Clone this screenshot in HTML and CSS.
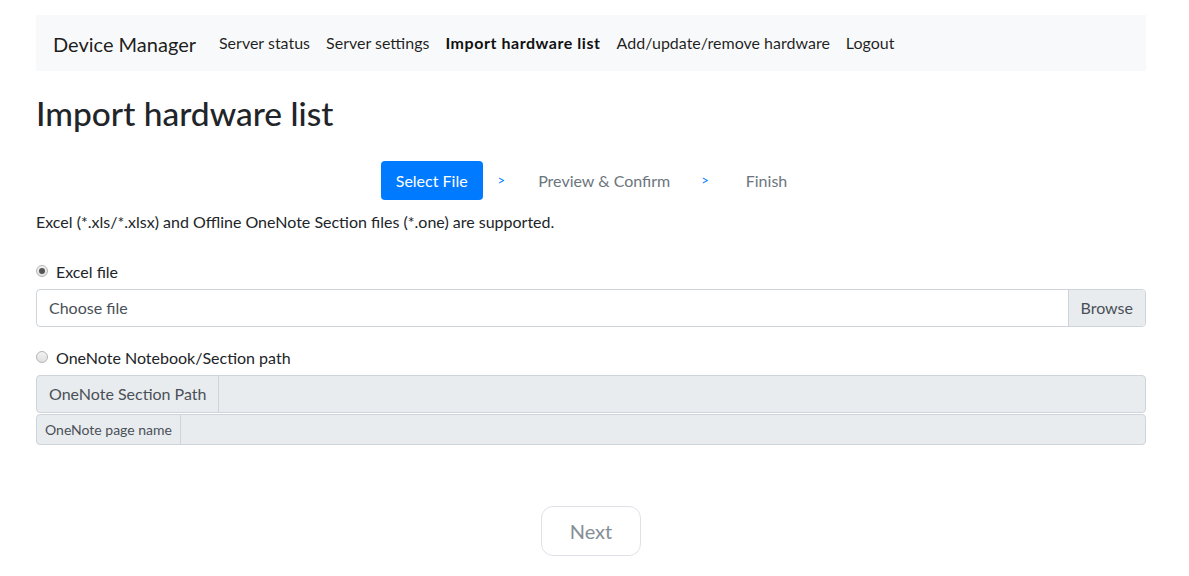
FILE: index.html
```html
<!DOCTYPE html>
<html lang="en">
<head>
<meta charset="utf-8">
<title>Import hardware list</title>
<link rel="stylesheet" href="styles.css">
</head>
<body>
<div class="container">
  <nav class="navbar">
    <span class="brand">Device Manager</span>
    <ul class="nav-links">
      <li><a class="nav-link">Server status</a></li>
      <li><a class="nav-link">Server settings</a></li>
      <li><a class="nav-link active">Import hardware list</a></li>
      <li><a class="nav-link">Add/update/remove hardware</a></li>
      <li><a class="nav-link">Logout</a></li>
    </ul>
  </nav>

  <h1 class="title">Import hardware list</h1>

  <ul class="steps">
    <li class="step current">Select File</li>
    <li class="sep">&gt;</li>
    <li class="step">Preview &amp; Confirm</li>
    <li class="sep">&gt;</li>
    <li class="step">Finish</li>
  </ul>

  <p class="hint">Excel (*.xls/*.xlsx) and Offline OneNote Section files (*.one) are supported.</p>

  <label class="radio-row first">
    <span class="radio checked"></span>
    <span>Excel file</span>
  </label>
  <div class="file-group">
    <span class="file-label">Choose file</span>
    <span class="file-btn">Browse</span>
  </div>

  <label class="radio-row second">
    <span class="radio"></span>
    <span>OneNote Notebook/Section path</span>
  </label>
  <div class="input-group">
    <span class="prepend">OneNote Section Path</span>
    <span class="field"></span>
  </div>
  <div class="input-group small">
    <span class="prepend">OneNote page name</span>
    <span class="field"></span>
  </div>

  <div class="actions">
    <button class="next-btn" disabled>Next</button>
  </div>
</div>
</body>
</html>
```

FILE: styles.css
```css
* { box-sizing: border-box; }
html, body { margin: 0; padding: 0; }
body {
  font-family: Lato, "Open Sans", "Liberation Sans", sans-serif;
  font-size: 16px;
  line-height: 1.5;
  color: #212529;
  background: #fff;
}
.container {
  width: 1110px;
  margin-left: 36px;
  padding-top: 15px;
}
.navbar {
  display: flex;
  align-items: center;
  height: 56px;
  background: #f8f9fa;
  padding: 0 16px 0 17px;
}
.brand {
  font-size: 20px;
  color: rgba(0,0,0,0.9);
  margin-right: 15px;
  line-height: 30px;
  padding-top: 2px;
}
.nav-links {
  list-style: none;
  display: flex;
  margin: 0;
  padding: 0;
}
.nav-link {
  display: block;
  padding: 8px 8px;
  color: rgba(0,0,0,0.88);
  text-decoration: none;
}
.nav-link.active { font-weight: 700; color: #111; letter-spacing: 0.55px; }

.title {
  font-size: 33.5px;
  font-weight: 500;
  line-height: 1.2;
  margin: 22px 0 0;
  color: #212529;
}
.steps {
  list-style: none;
  display: flex;
  justify-content: center;
  margin: 28px 0 0;
  padding: 0;
}
.steps li {
  padding: 8px 16px;
  line-height: 23px;
  color: #6c757d;
  border-radius: 4px;
}
.steps .current { background: #007bff; color: #fff; padding: 8px 15px; }
.steps .sep { color: #007bff; font-size: 13px; line-height: 23px; padding: 8px 17px 8px 15px; }
.steps li:last-child { padding: 8px 14px 8px 20px; }

.hint {
  margin: 10px 0 0;
  font-size: 16px;
  line-height: 24px;
}
.radio-row {
  display: flex;
  align-items: center;
  gap: 8px;
  font-size: 16px;
  line-height: 24px;
}
.radio-row.first { margin-top: 26px; }
.radio-row.second { margin-top: 19px; }
.radio {
  width: 12px;
  height: 12px;
  border-radius: 50%;
  border: 1px solid #b5b5b5;
  background: linear-gradient(#f2f2f2, #e0e0e0);
  display: inline-block;
  position: relative;
  margin-bottom: 3px;
}
.radio.checked::after {
  content: "";
  position: absolute;
  left: 2px; top: 2px;
  width: 6px; height: 6px;
  border-radius: 50%;
  background: #555;
}
.file-group {
  display: flex;
  height: 38px;
  margin-top: 5px;
  border: 1px solid #ced4da;
  border-radius: 4px;
  overflow: hidden;
}
.file-label {
  flex: 1;
  padding: 0 12px;
  line-height: 36px;
  color: #495057;
}
.file-btn {
  background: #e9ecef;
  border-left: 1px solid #ced4da;
  padding: 0 12px;
  line-height: 36px;
  color: #495057;
}
.input-group {
  display: flex;
  height: 38px;
  margin-top: 5px;
  border: 1px solid #ced4da;
  border-radius: 4px;
  background: #e9ecef;
  overflow: hidden;
}
.prepend {
  padding: 0 12px;
  line-height: 36px;
  color: #495057;
  border-right: 1px solid #ced4da;
  white-space: nowrap;
}
.field { flex: 1; }
.input-group.small {
  height: 31px;
  margin-top: 1px;
  font-size: 14px;
}
.input-group.small .prepend { line-height: 29px; padding: 0 8px; }
.actions {
  display: flex;
  justify-content: center;
  margin-top: 61px;
}
.next-btn {
  font-family: inherit;
  font-size: 20px;
  width: 100px;
  height: 50px;
  color: #868e96;
  background: #fff;
  border: 1px solid #dee2e6;
  border-radius: 12px;
}
```
